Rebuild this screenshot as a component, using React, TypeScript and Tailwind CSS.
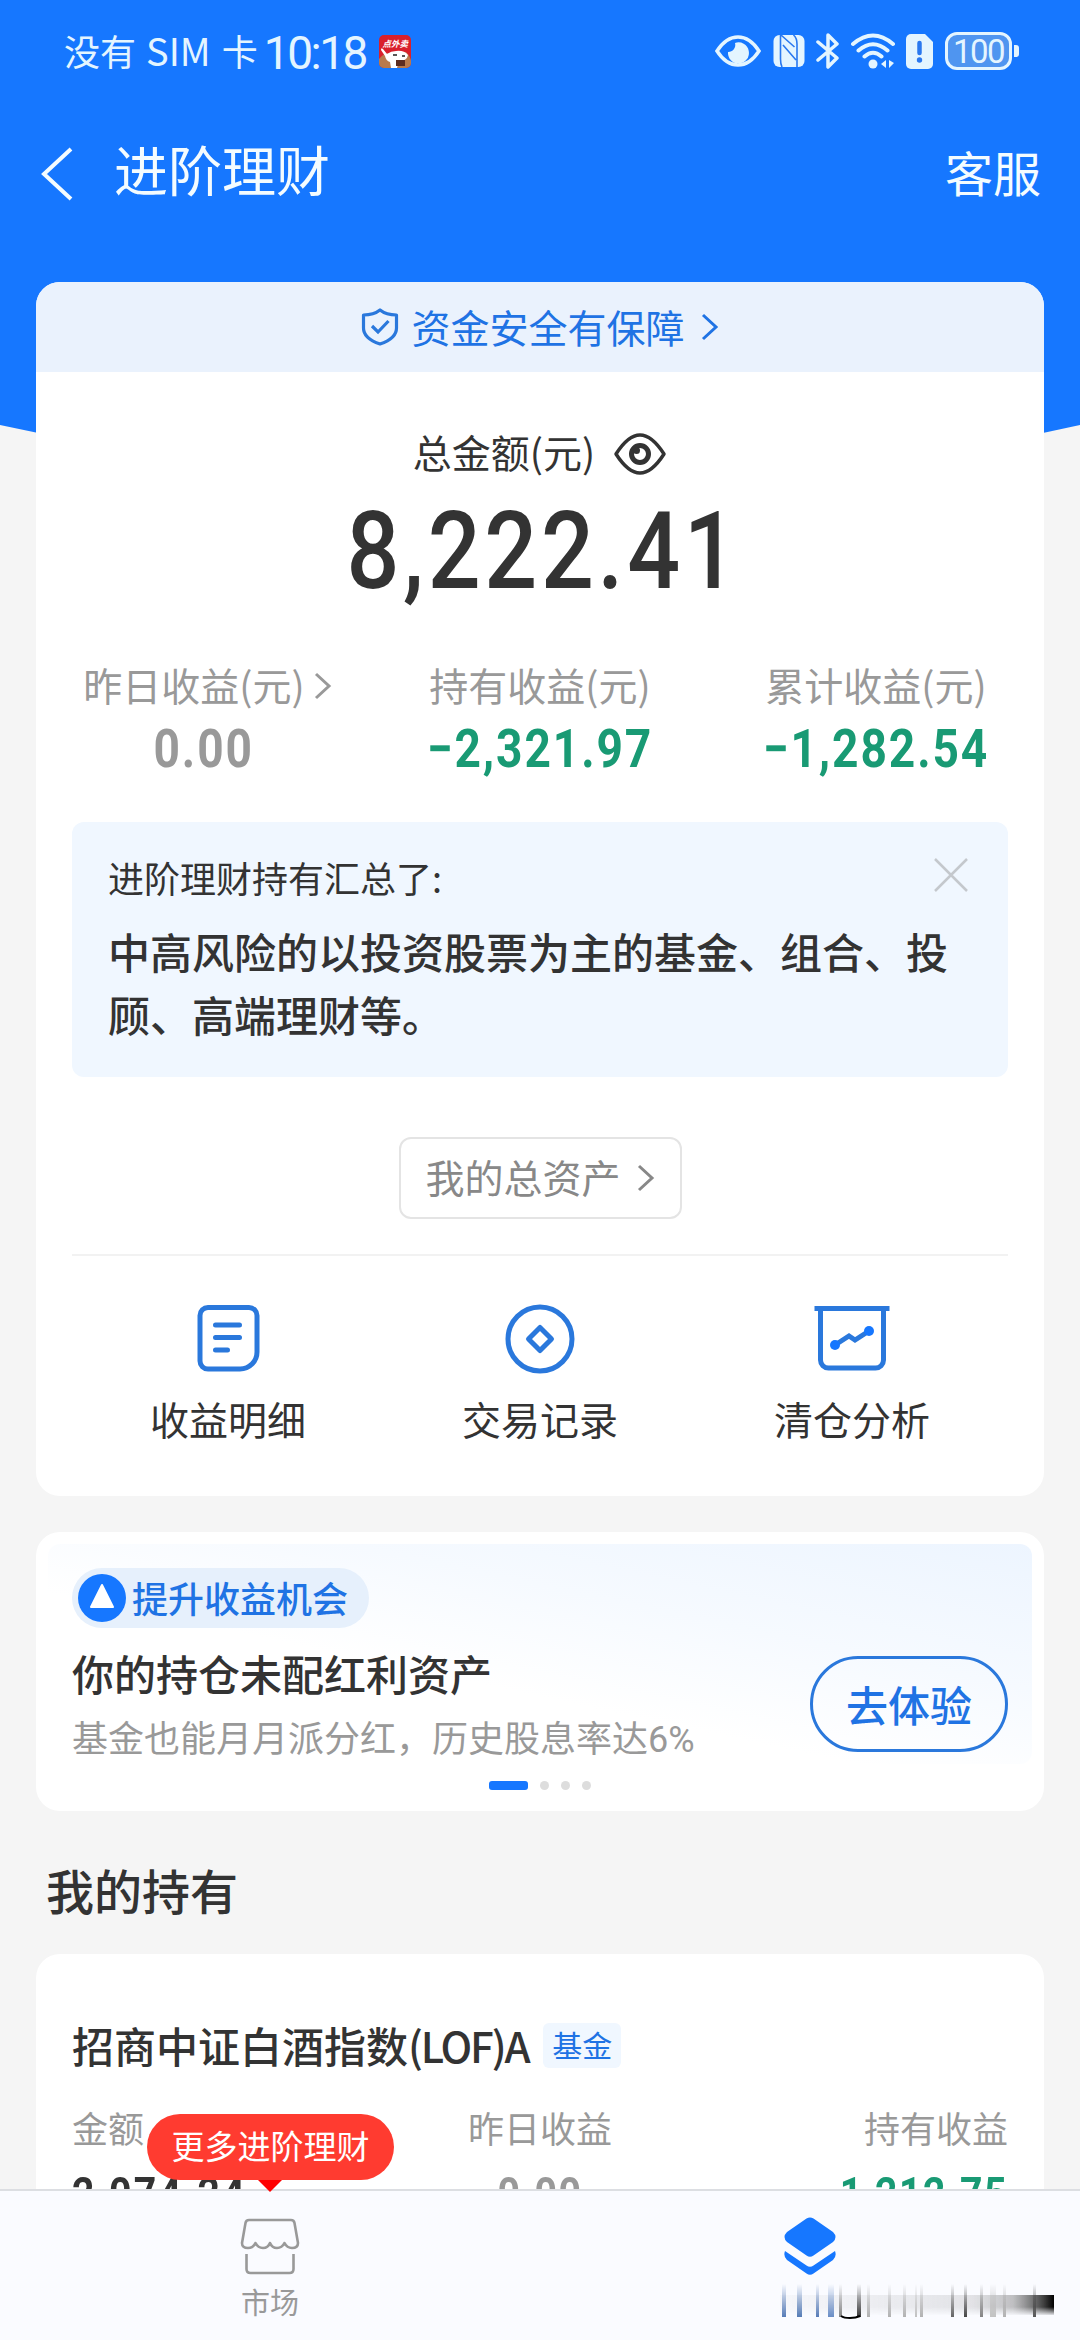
import type { ReactNode } from "react";

const actions = [
  { label: "收益明细", icon: <StatementIcon /> },
  { label: "交易记录", icon: <RecordIcon /> },
  { label: "清仓分析", icon: <AnalysisIcon /> },
];

function StatementIcon() {
  return (
    <svg width="80" height="80" viewBox="0 0 80 80" fill="none" stroke="#2a78dc" strokeWidth="5">
      <path d="M20 8.500H61a8 8 0 0 1 8 8V53A17 17 0 0 1 52 70H20a8 8 0 0 1-8-8V16.500a8 8 0 0 1 8-8Z" />
      <path d="M27.500 26h24M27.500 38.500h24M27.500 51h12" strokeLinecap="round" />
    </svg>
  );
}

function RecordIcon() {
  return (
    <svg width="80" height="80" viewBox="0 0 80 80" fill="none" stroke="#2a78dc" strokeWidth="5">
      <circle cx="40" cy="40" r="32" />
      <path d="M40 28.500 51.500 40 40 51.500 28.500 40Z" strokeLinejoin="round" />
    </svg>
  );
}

function AnalysisIcon() {
  return (
    <svg width="80" height="80" viewBox="0 0 80 80" fill="none" stroke="#2a78dc" strokeWidth="5">
      <path d="M2.500 9.500h75M8.500 9.500V61a8 8 0 0 0 8 8H63.500a8 8 0 0 0 8-8V9.500" />
      <path d="M23 46 37 37 43 41 57 32" />
      <circle cx="23" cy="46" r="5" fill="#1677ff" stroke="none" />
      <circle cx="57" cy="32" r="5" fill="#1677ff" stroke="none" />
    </svg>
  );
}

function Chevron({ className }: { className: string }) {
  return (
    <svg className={className} width="18" height="28" viewBox="0 0 18 28" fill="none" stroke="currentColor" strokeWidth="3">
      <path d="M2 2 15 14 2 26" />
    </svg>
  );
}

function StatusBar() {
  return (
    <div className="flex h-[102px] shrink-0 items-center pl-[64px] pr-[61px] text-[#e4f5ff]">
      <span className="-mt-[3px] whitespace-nowrap text-[36px] leading-[52px]">
        没有 <span className="ml-[2px] mr-[3px] text-[38px]">SIM</span> 卡
      </span>
      <span className="ml-[6px] mt-[3px] font-['Roboto'] text-[46px] leading-[52px] tracking-[-2.500px]">10:18</span>
      <svg className="ml-[13px]" width="32" height="33" viewBox="0 0 32 33">
        <rect width="32" height="33" rx="5" fill="#d9202c" />
        <path d="M0 24Q5 17 12 18L27 17Q32 22 32 27V28a5 5 0 0 1-5 5H5a5 5 0 0 1-5-5Z" fill="#b97a4d" />
        <path d="M2 15Q2 12 4 14L8 19Q12 16 17 16 25 15 29 20 28 26 20 26L18 33H12L11 27Q7 26 6 21Z" fill="#fff" />
        <path d="M17 25h9v6h-9z" fill="#5d2c20" />
        <path d="M14 20h4M23 21h3" stroke="#222" strokeWidth="1.500" />
        <text x="3.500" y="12" fontSize="8.500" fontWeight="700" fill="#fff" fontStyle="italic">点外卖</text>
      </svg>
      <div className="ml-auto flex items-center">
        <svg width="46" height="34" viewBox="0 0 46 34" fill="none">
          <path d="M2 17Q11 3 23 3T44 17Q35 31 23 31T2 17Z" stroke="currentColor" strokeWidth="3.500" />
          <path d="M20 9a7 7 0 0 1-7 9 10.500 10.500 0 1 0 7-9Z" fill="currentColor" />
        </svg>
        <svg className="ml-3" width="32" height="34" viewBox="0 0 32 34" fill="none">
          <rect x=".5" y="1" width="31" height="32" rx="6" fill="currentColor" />
          <path d="M7.500 1V25Q7.500 30 9 33M8 1 21.500 13M10 11 23 26M20.500 1Q24 4 24 10V33" stroke="#2a78ef" strokeWidth="1.600" />
        </svg>
        <svg className="ml-[11px]" width="24" height="36" viewBox="0 0 24 36" fill="none" stroke="currentColor" strokeWidth="3.500" strokeLinejoin="round" strokeLinecap="round">
          <path d="M2 9 21 25 12 34V2L21 11 2 27" />
        </svg>
        <svg className="ml-[10px]" width="46" height="36" viewBox="0 0 46 36" fill="none" stroke="currentColor" strokeWidth="4" strokeLinecap="round">
          <path d="M3 11Q23-6 43 11M8.500 17.500Q23 5 37.500 17.500M14.500 23.500Q23 16 31.500 23.500" />
          <circle cx="23" cy="31" r="4.500" fill="currentColor" stroke="none" />
          <path d="M36 27v8l-5-4ZM39 35v-8l5 3Z" fill="currentColor" stroke="none" />
        </svg>
        <svg className="ml-[10px]" width="28" height="35" viewBox="0 0 28 35">
          <path d="M5 0H19L27 8V30a5 5 0 0 1-5 5H5a5 5 0 0 1-5-5V5a5 5 0 0 1 5-5Z" fill="currentColor" />
          <path d="M13.500 9v10" stroke="#2a78ef" strokeWidth="4.500" strokeLinecap="round" />
          <circle cx="13.500" cy="26" r="2.700" fill="#2a78ef" />
        </svg>
        <div className="ml-[11px] flex h-[38px] w-[67px] items-center justify-center rounded-[12px] border-[3px] border-current bg-[#4f95f0] font-['Roboto'] text-[33px] leading-none tracking-[-1.500px]">
          100
        </div>
        <div className="ml-[2px] h-[12px] w-[5px] rounded-r-[3px] bg-current" />
      </div>
    </div>
  );
}

// Condensed numerals for amounts.
function Money({ children, className }: { children: ReactNode; className: string }) {
  return <span className={`inline-block font-['Roboto'] scale-x-[0.87] ${className}`}>{children}</span>;
}

function SummaryCard() {
  return (
    <section className="mx-[36px] h-[1214px] shrink-0 overflow-hidden rounded-[24px] bg-white">
      <div className="flex h-[90px] items-center justify-center bg-[#eaf2fd] text-[#1f73e4]">
        <svg width="38" height="38" viewBox="0 0 38 38" fill="none" stroke="#2a78dc" strokeWidth="3.200">
          <path d="M19 2C14 6 8 7 2.500 7V20C2.500 28 10 33 19 36 28 33 35.500 28 35.500 20V7C30 7 24 6 19 2Z" strokeLinejoin="round" />
          <path d="M11 18 17 24 27.500 13" />
        </svg>
        <span className="-mt-[2px] ml-3 text-[39px] leading-[56px]">资金安全有保障</span>
        <Chevron className="ml-[16px]" />
      </div>

      <div className="mt-[51px] flex h-[56px] items-center justify-center text-[#333]">
        <span className="text-[39px] leading-[56px]">总金额(元)</span>
        <svg className="ml-[18px] mt-[6px]" width="54" height="44" viewBox="0 0 54 44" fill="none" stroke="#333">
          <path d="M3 22C12 8 19 3 27 3S42 8 51 22C42 36 35 41 27 41S12 36 3 22Z" strokeWidth="3.500" strokeLinejoin="round" />
          <circle cx="27" cy="22" r="8.500" strokeWidth="5" />
          <circle cx="23.500" cy="18.500" r="3.500" fill="#333" stroke="none" />
        </svg>
      </div>
      <div className="mt-[13px] flex h-[120px] items-center justify-center">
        <Money className="ml-[7px] text-[107px] font-medium leading-[120px] tracking-[4.300px] text-[#333]">8,222.41</Money>
      </div>

      <div className="mt-[44px] flex justify-between px-[47px]">
        <div className="flex w-[242px] flex-col items-center">
          <span className="ml-[7px] flex items-center whitespace-nowrap text-[39px] leading-[56px] text-[#999]">
            昨日收益(元)
            <Chevron className="ml-[9px] mt-1" />
          </span>
          <Money className="mt-[6px] text-[53px] font-bold leading-[62px] tracking-[2.200px] text-[#999]">0.00</Money>
        </div>
        <div className="flex w-[242px] flex-col items-center">
          <span className="whitespace-nowrap text-[39px] leading-[56px] text-[#999]">持有收益(元)</span>
          <Money className="mt-[6px] text-[53px] font-bold leading-[62px] tracking-[2.200px] text-[#199a74]">−2,321.97</Money>
        </div>
        <div className="flex w-[242px] flex-col items-center">
          <span className="whitespace-nowrap text-[39px] leading-[56px] text-[#999]">累计收益(元)</span>
          <Money className="mt-[6px] text-[53px] font-bold leading-[62px] tracking-[2.200px] text-[#199a74]">−1,282.54</Money>
        </div>
      </div>

      <div className="mx-[36px] mt-[42px] flex h-[255px] items-start justify-between rounded-[12px] bg-[#f0f7ff] pl-[36px] pr-[39px] pt-[29px]">
        <div className="w-[850px] text-[#333]">
          <p className="text-[36px] leading-[52px]">进阶理财持有汇总了:</p>
          <p className="mt-[16px] text-[42px] font-medium leading-[63px]">
            中高风险的以投资股票为主的基金、组合、投顾、高端理财等。
          </p>
        </div>
        <svg className="-ml-4 mt-[6px] shrink-0" width="36" height="36" viewBox="0 0 36 36" stroke="#c4c8cd" strokeWidth="2.500">
          <path d="M2 2 34 34M34 2 2 34" />
        </svg>
      </div>

      <div className="mx-auto mt-[60px] flex h-[82px] w-[283px] items-center justify-center rounded-[12px] border-2 border-[#e4e4e4] text-[#888]">
        <span className="-mt-[4px] text-[39px] leading-[56px]">我的总资产</span>
        <Chevron className="ml-[16px]" />
      </div>

      <div className="mx-[36px] mt-[35px] grid grid-cols-3 border-t-2 border-[#f2f2f2] pt-[43px]">
        {actions.map((a) => (
          <div key={a.label} className="flex flex-col items-center">
            {a.icon}
            <span className="mt-[11px] text-[39px] leading-[56px] text-[#333]">{a.label}</span>
          </div>
        ))}
      </div>
    </section>
  );
}

function TipCard() {
  return (
    <section className="mx-[36px] mt-[36px] h-[279px] shrink-0 rounded-[24px] bg-white px-[12px] pt-[12px]">
      <div className="h-[220px] rounded-[12px] bg-[linear-gradient(192deg,#edf5ff_0%,#f6faff_34%,#ffffff_60%)] px-[24px] pt-[24px]">
        <div className="flex h-[60px] w-[297px] items-center rounded-full bg-[#e6f0fc] pl-[6px]">
          <svg width="48" height="48" viewBox="0 0 48 48">
            <circle cx="24" cy="24" r="24" fill="#1677ff" />
            <path d="M24 11 35 33H13Z" fill="#fff" stroke="#fff" strokeWidth="2" strokeLinejoin="round" />
          </svg>
          <span className="-mt-[3px] ml-[6px] text-[36px] font-medium leading-[52px] text-[#1f73e4]">提升收益机会</span>
        </div>
        <div className="mt-[13px] flex items-start justify-between">
          <div>
            <h2 className="text-[42px] font-medium leading-[64px] text-[#333]">你的持仓未配红利资产</h2>
            <p className="mt-px text-[36px] leading-[60px] text-[#999]">
              基金也能月月派分红，历史股息率达<span className="font-['Roboto']">6%</span>
            </p>
          </div>
          <button className="mt-[15px] h-[96px] w-[198px] rounded-full border-[3px] border-[#2a78dc] pb-[2px] text-[42px] font-medium text-[#1f73e4]">
            去体验
          </button>
        </div>
      </div>
      <div className="mt-[17px] flex justify-center gap-3">
        <span className="h-[9px] w-[39px] rounded-[3px] bg-[#1677ff]" />
        <span className="size-[9px] rounded-full bg-[#ddd]" />
        <span className="size-[9px] rounded-full bg-[#ddd]" />
        <span className="size-[9px] rounded-full bg-[#ddd]" />
      </div>
    </section>
  );
}

function HoldingCard() {
  return (
    <section className="mx-[36px] mt-[30px] h-[240px] shrink-0 rounded-t-[24px] bg-white px-[36px] pt-[59px]">
      <div className="flex h-[64px] items-center">
        <h3 className="whitespace-nowrap text-[42px] font-medium leading-[64px] text-[#333]">
          招商中证白酒指数<span className="tracking-[-2.200px]">(LOF)A</span>
        </h3>
        <span className="ml-[15px] flex h-[45px] w-[78px] items-center justify-center rounded-[6px] bg-[#f0f7ff] pb-[3px] text-[30px] leading-[42px] text-[#1f73e4]">
          基金
        </span>
      </div>
      <div className="mt-[22px] grid grid-cols-3 text-[36px] leading-[56px] text-[#999]">
        <span>金额</span>
        <span className="text-center">昨日收益</span>
        <span className="text-right">持有收益</span>
      </div>
      <div className="mt-[11px] grid grid-cols-3 text-[45px] font-bold leading-[56px] tracking-[1.800px]">
        <Money className="origin-left tracking-[2.800px] text-[#333]">2,074.24</Money>
        <Money className="text-center text-[#999]">0.00</Money>
        <Money className="origin-right text-right text-[#199a74]">1,212.75</Money>
      </div>
    </section>
  );
}

// Label of the active tab, smeared out into vertical streaks.
const streaks = [
  { x: 2, w: 4, c: "#476fb0" },
  { x: 17, w: 5, c: "#456fae" },
  { x: 36, w: 3, c: "#476fb0" },
  { x: 48, w: 6, c: "#5b82c0" },
  { x: 59, w: 3, c: "#777" },
  { x: 77, w: 4, c: "#222" },
  { x: 87, w: 3, c: "#aaa" },
  { x: 108, w: 3, c: "#aaa" },
  { x: 123, w: 3, c: "#aaa" },
  { x: 135, w: 2, c: "#bbb" },
  { x: 140, w: 3, c: "#aaa" },
  { x: 171, w: 3, c: "#555" },
  { x: 184, w: 3, c: "#333" },
  { x: 200, w: 3, c: "#777" },
  { x: 210, w: 6, c: "#bbb" },
  { x: 223, w: 3, c: "#aaa" },
  { x: 253, w: 3, c: "#444" },
];

function Smear() {
  return (
    <svg className="absolute left-[780px] top-[93px]" width="276" height="36" viewBox="0 0 276 36">
      <defs>
        <linearGradient id="fade" x1="0" y1="0" x2="0" y2="1">
          <stop offset="0" stopColor="#fff" stopOpacity="0" />
          <stop offset="1" stopColor="#fff" />
        </linearGradient>
        <linearGradient id="band" x1="0" y1="0" x2="1" y2="0">
          <stop offset="0" stopColor="#888" stopOpacity="0.040" />
          <stop offset="0.700" stopColor="#777" stopOpacity="0.180" />
          <stop offset="0.850" stopColor="#666" stopOpacity="0.400" />
          <stop offset="0.960" stopColor="#222" stopOpacity="0.850" />
          <stop offset="1" stopColor="#000" />
        </linearGradient>
        <mask id="rise">
          <rect width="276" height="36" fill="url(#fade)" />
        </mask>
        <linearGradient id="soft" x1="0" y1="0" x2="0" y2="1">
          <stop offset="0" stopColor="#fff" />
          <stop offset="0.600" stopColor="#fff" />
          <stop offset="1" stopColor="#fff" stopOpacity="0.100" />
        </linearGradient>
        <mask id="fall">
          <rect y="11" width="276" height="20" fill="url(#soft)" />
        </mask>
      </defs>
      <rect x="0" y="11" width="274" height="20" fill="url(#band)" mask="url(#fall)" />
      <g mask="url(#rise)">
        {streaks.map((s) => (
          <rect key={s.x} x={s.x} y="0" width={s.w} height="33" fill={s.c} />
        ))}
      </g>
      <path d="M61 32Q64 34 70 34T80 32" fill="none" stroke="#000" strokeWidth="2" />
    </svg>
  );
}

function TabBar() {
  return (
    <nav className="relative grid h-[151px] shrink-0 grid-cols-2 border-t-2 border-[#dcdee2] bg-[#fafbff]">
      <div className="flex flex-col items-center pt-[26px]">
        <svg width="60" height="60" viewBox="0 0 60 60" fill="none" stroke="#999" strokeWidth="2.600" strokeLinejoin="round">
          <path d="M9 3H51Q54 3 54.500 6L58 26Q58 31 52 31 47 31 44.500 26 42 31 37 31 32 31 30 26 28 31 23 31 18 31 15.500 26 13 31 8 31 2 31 2 26L5.500 6Q6 3 9 3Z" />
          <path d="M6.500 37V52Q6.500 56 10.500 56H49.500Q53.500 56 53.500 52V37" />
        </svg>
        <span className="mt-[3px] text-[29px] leading-[42px] text-[#999]">市场</span>
      </div>
      <div className="flex flex-col items-center pt-[26px]">
        <svg width="54" height="58" viewBox="0 0 54 58" fill="#1677ff">
          <path d="M30.500 1.500 50 15Q55 20 50 25L30.500 38.500Q27 41 23.500 38.500L4 25Q-1 20 4 15L23.500 1.500Q27-.5 30.500 1.500Z" />
          <path d="M2 34 23.500 48.500Q27 51 30.500 48.500L52 34Q54 39 50 43L30.500 56.500Q27 59 23.500 56.500L4 43Q0 39 2 34Z" />
        </svg>
      </div>
      <Smear />
      <div className="absolute left-[147px] top-[-77px] flex h-[66px] w-[247px] items-center justify-center rounded-full bg-[#ff3b30] pb-[3px] text-[33px] text-white">
        更多进阶理财
      </div>
      <div className="absolute left-[258px] top-[-11px] border-x-[12px] border-t-[12px] border-x-transparent border-t-[#ff0000]" />
    </nav>
  );
}

export default function App() {
  return (
    <div className="relative flex h-[2340px] w-[1080px] flex-col overflow-hidden bg-[#f5f5f5] font-['Noto_Sans_CJK_SC',sans-serif]">
      <svg className="absolute left-0 top-0" width="1080" height="500" viewBox="0 0 1080 500">
        <path d="M0 0H1080V425Q540 545 0 425Z" fill="#1677ff" />
      </svg>
      <div className="relative flex min-h-0 flex-1 flex-col">
        <StatusBar />
        <header className="flex h-[180px] shrink-0 items-start pl-[40px] pr-[39px] pt-[28px] text-[#f4fcff]">
          <svg className="mt-[17px]" width="34" height="54" viewBox="0 0 34 54" fill="none" stroke="currentColor" strokeWidth="4">
            <path d="M31 2 4 27 31 52" />
          </svg>
          <h1 className="ml-[40px] text-[54px] leading-[78px]">进阶理财</h1>
          <span className="ml-auto mt-[2px] text-[48px] leading-[78px]">客服</span>
        </header>
        <SummaryCard />
        <TipCard />
        <h2 className="ml-[46px] mt-[43px] shrink-0 text-[48px] font-medium leading-[70px] text-[#333]">我的持有</h2>
        <HoldingCard />
      </div>
      <TabBar />
    </div>
  );
}
